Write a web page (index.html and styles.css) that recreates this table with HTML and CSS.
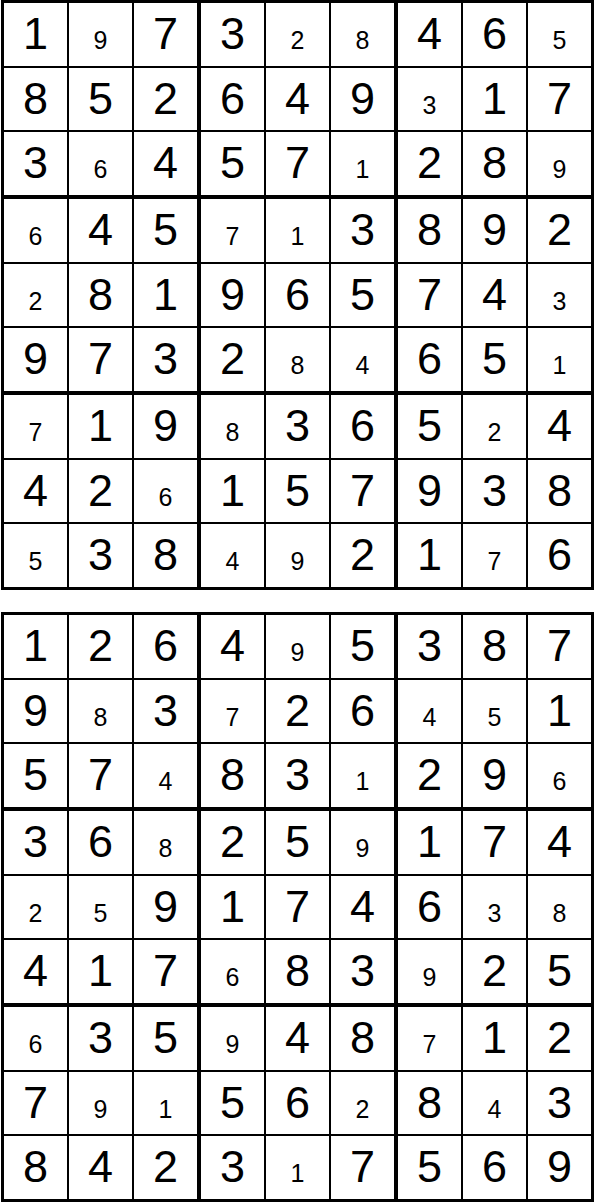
FILE: index.html
```html
<!DOCTYPE html>
<html lang="en">
<head>
    <meta charset="UTF-8">
    <meta name="viewport" content="width=device-width, initial-scale=1.0">
    <title>Sudoku Solutions</title>
    <link rel="stylesheet" href="styles.css">
</head>
<body>
    <div class="page">
        <div class="board" id="board1"></div>
        <div class="board" id="board2"></div>
    </div>

    <script>
        // digits row by row; in the mask "s" marks a given (small) digit
        const puzzles = [
            {
                digits: [
                    "197328465", "852649317", "364571289",
                    "645713892", "281965743", "973284651",
                    "719836524", "426157938", "538492176"
                ],
                mask: [
                    "bsbbssbbs", "bbbbbbsbb", "bsbbbsbbs",
                    "sbbssbbbb", "sbbbbbbbs", "bbbbssbbs",
                    "sbbsbbbsb", "bbsbbbbbb", "sbbssbbsb"
                ]
            },
            {
                digits: [
                    "126495387", "983726451", "574831296",
                    "368259174", "259174638", "417683925",
                    "635948712", "791562843", "842317569"
                ],
                mask: [
                    "bbbbsbbbb", "bsbsbbssb", "bbsbbsbbs",
                    "bbsbbsbbb", "ssbbbbbss", "bbbsbbsbb",
                    "sbbsbbsbb", "bssbbsbsb", "bbbbsbbbb"
                ]
            }
        ];

        function renderBoard(el, puzzle) {
            for (let b = 0; b < 9; b++) {
                const box = document.createElement('div');
                box.className = 'box';
                for (let i = 0; i < 9; i++) {
                    const r = Math.floor(b / 3) * 3 + Math.floor(i / 3);
                    const c = (b % 3) * 3 + (i % 3);
                    const cell = document.createElement('div');
                    cell.className = 'cell';
                    const d = document.createElement('span');
                    d.textContent = puzzle.digits[r][c];
                    if (puzzle.mask[r][c] === 's') d.className = 'small';
                    cell.appendChild(d);
                    box.appendChild(cell);
                }
                el.appendChild(box);
            }
        }

        renderBoard(document.getElementById('board1'), puzzles[0]);
        renderBoard(document.getElementById('board2'), puzzles[1]);
    </script>
</body>
</html>
```

FILE: styles.css
```css
body {
    margin: 0;
    background: #fff;
    font-family: "Liberation Sans", Arial, sans-serif;
    color: #000;
}
.page {
    display: flex;
    flex-direction: column;
    gap: 22px;
    padding-left: 1px;
}
.board {
    width: 593px;
    height: 590px;
    box-sizing: border-box;
    padding: 3px;
    background: #000;
    display: grid;
    grid-template-columns: repeat(3, minmax(0, 1fr));
    grid-template-rows: repeat(3, minmax(0, 1fr));
    gap: 4px;
}
.box {
    display: grid;
    grid-template-columns: repeat(3, minmax(0, 1fr));
    grid-template-rows: repeat(3, minmax(0, 1fr));
    gap: 2px;
}
.cell {
    background: #fff;
    text-align: center;
    font-size: 45px;
    line-height: 62px;
    overflow: hidden;
}
.cell .small {
    font-size: 25px;
    line-height: 1;
}
```
